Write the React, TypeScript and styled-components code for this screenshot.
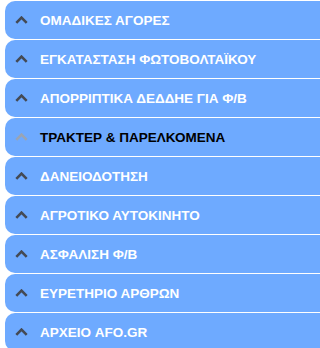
import styled, { createGlobalStyle } from "styled-components";

const GlobalStyle = createGlobalStyle`
  body {
    margin: 0;
    background: #ffffff;
    font-family: "Liberation Sans", Arial, sans-serif;
  }
`;

const items = [
  { label: "ΟΜΑΔΙΚΕΣ ΑΓΟΡΕΣ" },
  { label: "ΕΓΚΑΤΑΣΤΑΣΗ ΦΩΤΟΒΟΛΤΑΪΚΟΥ" },
  { label: "ΑΠΟΡΡΙΠΤΙΚΑ ΔΕΔΔΗΕ ΓΙΑ Φ/Β" },
  { label: "ΤΡΑΚΤΕΡ & ΠΑΡΕΛΚΟΜΕΝΑ", active: true },
  { label: "ΔΑΝΕΙΟΔΟΤΗΣΗ" },
  { label: "ΑΓΡΟΤΙΚΟ ΑΥΤΟΚΙΝΗΤΟ" },
  { label: "ΑΣΦΑΛΙΣΗ Φ/Β" },
  { label: "ΕΥΡΕΤΗΡΙΟ ΑΡΘΡΩΝ" },
  { label: "ΑΡΧΕΙΟ AFO.GR" },
];

const App = () => {
  return (
    <>
      <GlobalStyle />
      <Menu>
        {items.map((item) => (
          <Item key={item.label}>
            <Chevron viewBox="0 0 13 8" $active={item.active}>
              <path d="M1.3 6.8 L6.5 1.6 L11.7 6.8" />
            </Chevron>
            <Label $active={item.active}>{item.label}</Label>
          </Item>
        ))}
      </Menu>
    </>
  );
};

const Menu = styled.ul`
  list-style: none;
  margin: 0;
  padding: 1px 0 0 5px;
  display: flex;
  flex-direction: column;
  gap: 1px;
  height: 348px;
  overflow: hidden;
  box-sizing: border-box;
`;

const Item = styled.li`
  flex: none;
  height: 38px;
  display: flex;
  align-items: center;
  gap: 12px;
  padding-left: 10px;
  background: #6eaaff;
  border-radius: 10px 0 0 10px;
  cursor: pointer;
`;

const Chevron = styled.svg<{ $active?: boolean }>`
  width: 13px;
  height: 8px;
  flex: none;
  fill: none;
  stroke: ${(p) => (p.$active ? "#9aa4b4" : "#444a55")};
  stroke-width: 2.6;
`;

const Label = styled.span<{ $active?: boolean }>`
  font-size: 13.5px;
  font-weight: bold;
  color: ${(p) => (p.$active ? "#000000" : "#ffffff")};
  white-space: nowrap;
`;

export default App;
